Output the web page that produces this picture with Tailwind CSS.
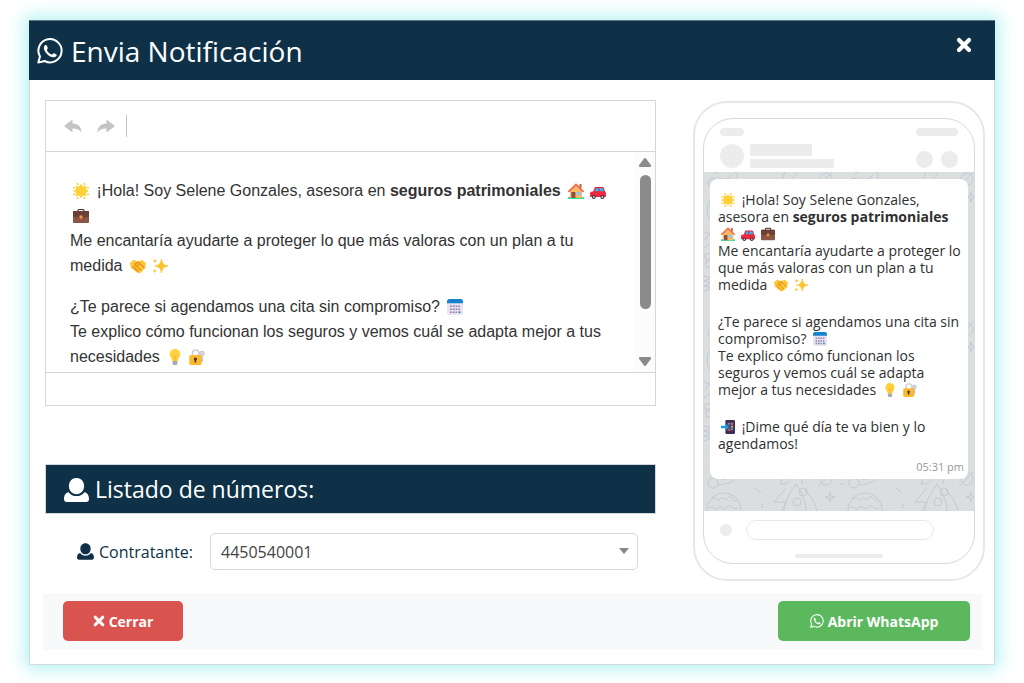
<!DOCTYPE html>
<html lang="es">
    <head>
        <meta charset="UTF-8" />
        <meta name="viewport" content="width=device-width, initial-scale=1.0" />
        <script src="https://cdn.jsdelivr.net/npm/@tailwindcss/browser@4"></script>
        <title>Envia Notificación</title>
    </head>
    <body class="min-h-screen bg-white px-[29px] py-5 font-['Open_Sans','Noto_Sans',sans-serif] text-[#212529]">
        <!-- Icon and emoji definitions -->
        <svg class="hidden" aria-hidden="true">
            <symbol id="whatsapp" viewBox="0 0 26 26">
                <path d="M1.3 24.6 3 18.6A11.6 11.6 0 1 1 7.6 23Z" fill="none" stroke="currentColor" stroke-width="2" stroke-linejoin="round" />
                <path d="M8.600 7c.700-.200 1.100.200 1.400.900l.700 1.800c.2.600-.1 1-.5 1.500-.4.500-.4.900 0 1.500 1 1.700 2.400 2.900 4.200 3.700.5.200.9.100 1.300-.4.700-.800 1-.900 1.700-.6l1.700.9c.6.300.7.700.5 1.300-.5 1.300-2 1.900-3.600 1.600-4.100-.8-8-4.300-9-8.300-.4-1.700.2-3.500 1.600-3.900Z" fill="currentColor" />
            </symbol>
            <symbol id="user" viewBox="0 0 25 24">
                <path d="M12.500 0c4.400 0 7.600 3.300 7.600 8s-3.200 8.200-7.600 8.200S4.900 12.700 4.900 8 8.100 0 12.500 0Z" />
                <path d="M4.600 14.200c2 2.500 4.800 3.900 7.900 3.900s5.900-1.400 7.900-3.900c3.100.4 4.600 3.300 4.600 6.800 0 1.900-1 3-2.800 3H2.800C1 24 0 22.900 0 21c0-3.500 1.500-6.400 4.600-6.800Z" />
            </symbol>
            <symbol id="times" viewBox="0 0 16 16">
                <path d="m3 3 10 10M13 3 3 13" stroke="currentColor" stroke-width="4.200" stroke-linecap="round" />
            </symbol>
            <symbol id="reply" viewBox="0 0 18 14">
                <path d="M0 7 8.500.500v4C14 4.600 17.500 8 17.500 13.500 15.500 10.500 13 9.400 8.500 9.500v4Z" />
            </symbol>
            <symbol id="sun" viewBox="0 0 16 16">
                <path d="m8 .8 2 2.800 3.300-.9-.3 3.400L15.600 8 13 9.900l.3 3.400-3.300-.9L8 15.200l-2-2.800-3.300.9.300-3.400L.4 8 3 6.100l-.3-3.400 3.300.9Z" fill="#fdd13a" />
                <g fill="#fcc21b">
                    <circle cx="4.600" cy="1" r=".9" /><circle cx="11.400" cy="1" r=".9" />
                    <circle cx="1" cy="4.600" r=".9" /><circle cx="15" cy="4.600" r=".9" />
                    <circle cx="1" cy="11.400" r=".9" /><circle cx="15" cy="11.400" r=".9" />
                    <circle cx="4.600" cy="15" r=".9" /><circle cx="11.400" cy="15" r=".9" />
                </g>
            </symbol>
            <symbol id="house" viewBox="0 0 16 16">
                <path d="M0 14h16v2H0z" fill="#2fe09b" />
                <path d="M11.500 1h2v4h-2z" fill="#c75b45" />
                <path d="M2 7.500 8 2l6 5.500V15H2z" fill="#fbb867" />
                <path d="M.9 8.300 8 1.400l7.100 6.900" fill="none" stroke="#ed6a4c" stroke-width="1.800" stroke-linecap="round" />
                <path d="M3.400 9h4v6h-4z" fill="#8a5142" />
                <path d="M9 9h3.600v3H9z" fill="#7ecbff" />
            </symbol>
            <symbol id="car" viewBox="0 0 16 16">
                <path d="M5.500 4h6.500c1 0 1.600.400 2 1.200L15.200 9H3l1.500-3.800C4.700 4.400 4.900 4 5.500 4Z" fill="#e8213f" />
                <path d="M6 5h2.500v3.500H4.600zM9.500 5H12c.6 0 .8.200 1 .600l1 2.900H9.500z" fill="#37b5e8" />
                <path d="M2 8.500h12.200c1.100 0 1.800.800 1.800 1.700V13c0 .700-.3 1-1 1H1c-.7 0-1-.400-1-1v-1.800C0 9.500.7 8.500 2 8.500Z" fill="#f3273e" />
                <circle cx="3.800" cy="14" r="2" fill="#35303e" /><circle cx="12.300" cy="14" r="2" fill="#35303e" />
                <circle cx="3.800" cy="14" r=".9" fill="#ddd" /><circle cx="12.300" cy="14" r=".9" fill="#ddd" />
            </symbol>
            <symbol id="briefcase" viewBox="0 0 16 16">
                <path d="M5 4V2.500C5 2 5.400 1.500 6 1.500h4c.600 0 1 .500 1 1V4" fill="none" stroke="#4b2b27" stroke-width="1.200" />
                <rect y="3" width="16" height="12" rx="1" fill="#8c5543" />
                <path d="M0 4c0-.600.400-1 1-1h14c.600 0 1 .400 1 1v4.500l-6 1.200H6L0 8.500Z" fill="#6a4037" />
                <circle cx="8" cy="9" r="1.700" fill="#f19a3b" />
            </symbol>
            <symbol id="handshake" viewBox="0 0 16 16">
                <path d="m0 5 3.500-3L8 3.500 12.500 2 16 5.500l-1 5-4.500 4.200c-1 .700-2 .600-3 .100L1 10Z" fill="#ffc636" />
                <path d="m5 6 3-2 6 5.500M3 8.500l5 5M5 7.200l6 5M5 6c.6 2.500 2.200 2 3.800.500" fill="none" stroke="#e58a1c" stroke-width="1.100" stroke-linecap="round" />
            </symbol>
            <symbol id="sparkles" viewBox="0 0 16 16">
                <path d="M9.500 1c.9 4.700 2 6 6.500 7-4.500 1-5.600 2.300-6.500 7C8.600 10.300 7.500 9 3 8c4.500-1 5.600-2.300 6.500-7Z" fill="#fdc22f" stroke="#fdc22f" stroke-width=".8" stroke-linejoin="round" />
                <path d="M3 .500c.3 1.700.8 2.200 2.500 2.500C3.800 3.300 3.300 3.800 3 5.500 2.700 3.800 2.200 3.300.5 3 2.200 2.700 2.700 2.200 3 .500ZM2.600 10.500c.3 1.700.8 2.200 2.500 2.500-1.700.300-2.200.800-2.500 2.500-.3-1.700-.8-2.200-2.500-2.500 1.700-.300 2.200-.800 2.500-2.500Z" fill="#fdc22f" />
            </symbol>
            <symbol id="calendar" viewBox="0 0 16 16">
                <rect width="16" height="16" rx="2.500" fill="#e9e3f0" />
                <path d="M0 4.200V2.500C0 1 1 0 2.500 0h11C15 0 16 1 16 2.500v1.700Z" fill="#1683cf" />
                <path d="M3 7.200h10M3 10.200h10M3 13.200h7" stroke="#8a83ad" stroke-width="1.600" stroke-dasharray="1.800 1" />
                <path d="M11.500 12.400h2v1.600h-2z" fill="#1683cf" />
            </symbol>
            <symbol id="bulb" viewBox="0 0 16 16">
                <path d="M8 0c3.300 0 5.200 2.300 5.200 5.200 0 2.800-2.100 4-2.500 6.800H5.300C4.900 9.200 2.800 8 2.800 5.200 2.800 2.300 4.700 0 8 0Z" fill="#ffd23c" />
                <path d="M6.500 6.500 8 8l1.500-1.500M8 8v4" fill="none" stroke="#f6a22a" stroke-width=".8" />
                <path d="M5.600 12h4.800v2.500c0 1-.8 1.500-2.400 1.500s-2.400-.500-2.400-1.500Z" fill="#a9a6b3" />
            </symbol>
            <symbol id="lock" viewBox="0 0 16 16">
                <path d="M3.500 7V4.500C3.500 2.300 4.800 1 6.800 1S10 2.300 10 4.500V7" fill="none" stroke="#d0ccd8" stroke-width="1.600" />
                <path d="M13 6.500V13" stroke="#bcb8c4" stroke-width="1.600" />
                <circle cx="13" cy="4.500" r="2" fill="#dedbe3" stroke="#c9c6d0" stroke-width="1.400" />
                <rect x=".3" y="6" width="12.200" height="10" rx="1.500" fill="#fcb92c" />
                <path d="M6.400 8.600a1.500 1.500 0 0 1 .8 2.800v2H5.600v-2a1.500 1.500 0 0 1 .8-2.800Z" fill="#4b3440" />
            </symbol>
            <symbol id="phone-arrow" viewBox="0 0 16 16">
                <rect x="5" width="11" height="16" rx="1.500" fill="#3f2d57" />
                <path d="M6.500 2h8v11h-8z" fill="#563a60" />
                <path d="M8 3.500h2v2H8zM11.500 9.500h2v2h-2z" fill="#31b3e8" />
                <path d="M11.500 3.500h2v2h-2zM8.500 10h2v2h-2z" fill="#f5713f" />
                <path d="M11.500 6.500h2v2h-2z" fill="#f9c23c" />
                <path d="M0 6.500h5V4l4.500 4L5 12V9.500H0Z" fill="#1d9ce5" />
            </symbol>
        </svg>

        <div class="border border-[#d5dcde] bg-white shadow-[0_0_17px_4px_#b2f2f2]">
            <!-- Header -->
            <header class="-mx-px -mt-px flex h-[60px] items-center justify-between border-t border-[#5c7580] bg-[#0e3147] pr-[23px] pl-2 text-white">
                <h1 class="flex items-center gap-2 text-[28px]">
                    <svg class="size-[26px]"><use href="#whatsapp" /></svg>
                    Envia Notificación
                </h1>
                <button type="button" aria-label="Cerrar ventana" class="mb-3">
                    <svg class="size-4"><use href="#times" /></svg>
                </button>
            </header>

            <main class="flex justify-between pt-5 pr-[9px] pl-[15px]">
                <div class="w-[611px]">
                    <!-- Editor -->
                    <section class="border border-[#d3d7db]">
                        <div class="flex h-[50px] items-center gap-[15px] pl-[18px] text-[#c4c4c4]">
                            <button type="button" aria-label="Deshacer">
                                <svg class="h-[14px] w-[18px] fill-current"><use href="#reply" /></svg>
                            </button>
                            <button type="button" aria-label="Rehacer">
                                <svg class="h-[14px] w-[18px] -scale-x-100 fill-current"><use href="#reply" /></svg>
                            </button>
                            <span class="-ml-1 h-[22px] w-px bg-[#c4c4c4]"></span>
                        </div>
                        <div class="flex h-[222px] justify-between border-y border-[#d3d7db]">
                            <div
                                contenteditable="true"
                                role="textbox"
                                aria-label="Mensaje"
                                class="w-[568px] space-y-4 pt-[26px] pl-6 font-['Liberation_Sans',Arial,sans-serif] text-base leading-[25px] text-[#333]"
                            >
                                <p>
                                    <svg class="mx-[3px] inline size-4 align-[-3px]"><use href="#sun" /></svg> ¡Hola! Soy Selene Gonzales, asesora en <b>seguros patrimoniales</b>
                                    <svg class="mx-[3px] inline size-4 align-[-3px]"><use href="#house" /></svg><svg class="mx-[3px] inline size-4 align-[-3px]"><use href="#car" /></svg><svg class="mx-[3px] inline size-4 align-[-3px]"><use href="#briefcase" /></svg><br />
                                    Me encantaría ayudarte a proteger lo que más valoras con un plan a tu medida
                                    <svg class="mx-[3px] inline size-4 align-[-3px]"><use href="#handshake" /></svg><svg class="mx-[3px] inline size-4 align-[-3px]"><use href="#sparkles" /></svg>
                                </p>
                                <p>
                                    ¿Te parece si agendamos una cita sin compromiso?
                                    <svg class="mx-[3px] inline size-4 align-[-3px]"><use href="#calendar" /></svg><br />
                                    Te explico cómo funcionan los seguros y vemos cuál se adapta mejor a tus necesidades
                                    <svg class="mx-[3px] inline size-4 align-[-3px]"><use href="#bulb" /></svg><svg class="mx-[3px] inline size-4 align-[-3px]"><use href="#lock" /></svg>
                                </p>
                            </div>
                            <!-- Scrollbar -->
                            <div class="flex w-5 flex-col items-center bg-[#fcfcfc] py-[6px]">
                                <svg class="h-[9px] w-3 fill-[#8b8b8b]" viewBox="0 0 12 9"><path d="M6 0c.5 0 .8.300 1 .600L11.800 7c.5.900.1 2-1 2H1.200c-1.100 0-1.500-1.100-1-2L5 .600C5.200.300 5.500 0 6 0Z" /></svg>
                                <div class="mt-2 h-[134px] w-[11px] rounded-full bg-[#8b8b8b]"></div>
                                <svg class="mt-auto h-[9px] w-3 rotate-180 fill-[#8b8b8b]" viewBox="0 0 12 9"><path d="M6 0c.5 0 .8.300 1 .600L11.800 7c.5.900.1 2-1 2H1.200c-1.100 0-1.500-1.100-1-2L5 .600C5.200.300 5.500 0 6 0Z" /></svg>
                            </div>
                        </div>
                        <div class="h-8"></div>
                    </section>

                    <!-- Numbers -->
                    <h2 class="mt-[58px] flex h-[50px] items-center gap-[6px] border border-[#d3d7db] bg-[#0e3147] pt-px pl-[18px] text-[23px] text-white">
                        <svg class="h-6 w-[25px] fill-current"><use href="#user" /></svg>
                        Listado de números:
                    </h2>
                    <div class="mt-[19px] flex items-center justify-between pr-[18px] pl-8">
                        <label for="contratante" class="flex items-center gap-[5px] text-base text-[#0e3147]">
                            <svg class="h-[17px] w-[17px] fill-current"><use href="#user" /></svg>
                            Contratante:
                        </label>
                        <div class="relative w-[428px]">
                            <select id="contratante" class="h-[37px] w-full appearance-none rounded-[5px] border border-[#d3d9de] bg-white pl-[10px] text-base text-[#444]">
                                <option>4450540001</option>
                            </select>
                            <svg class="pointer-events-none absolute top-[15px] right-[9px] h-[6px] w-[10px] fill-[#888]" viewBox="0 0 10 6"><path d="M0 0h10L5 6z" /></svg>
                        </div>
                    </div>
                </div>

                <!-- Phone preview -->
                <aside class="mt-px w-[292px] rounded-[34px] border-2 border-[#e6e8e8] px-2 pt-[15px] pb-[15px]">
                    <div class="overflow-hidden rounded-[30px] border border-[#d5dadb]">
                        <div class="h-[53px] px-4 pt-[9px]">
                            <div class="flex justify-between">
                                <span class="h-2 w-6 rounded-full bg-[#ececec]"></span>
                                <span class="h-2 w-[42px] rounded-full bg-[#ececec]"></span>
                            </div>
                            <div class="mt-2 flex items-center">
                                <span class="size-6 rounded-full bg-[#ececec]"></span>
                                <div class="ml-[6px] space-y-[3px]">
                                    <div class="h-3 w-[62px] bg-[#ececec]"></div>
                                    <div class="h-[9px] w-[84px] bg-[#ececec]"></div>
                                </div>
                                <span class="mt-[7px] ml-auto size-[17px] rounded-full bg-[#ececec]"></span>
                                <span class="mt-[7px] ml-2 size-[17px] rounded-full bg-[#ececec]"></span>
                            </div>
                        </div>
                        <div class="relative bg-[#dadedf] px-[6px] pt-[7px] pb-8">
                            <svg class="absolute inset-0 size-full" fill="none" stroke="#c3c8d2">
                                <pattern id="doodles" width="141" height="150" patternUnits="userSpaceOnUse">
                                    <!-- planet -->
                                    <circle cx="20" cy="38" r="17" />
                                    <path d="M8 27c4-4 5 4 8 0s5 4 8-1 4 4 9 3M5 36c5-4 5 4 9 0s5 4 9-1 5 4 11 1" />
                                    <!-- saucer -->
                                    <path d="M10 2c8-6 20-6 23 0 2 6-8 10-19 11M14 5c4 4 12 2 14-2" />
                                    <circle cx="9" cy="11" r="5" />
                                    <!-- rocket -->
                                    <path d="M80 46c-1-12 2-20 12-34 8 12 12 22 9 36M82 30l-8 16M82 16 70 30h11M101 18c8 8 13 18 12 28l-10-4" />
                                    <circle cx="93" cy="30" r="4" /><circle cx="99" cy="20" r="4" />
                                    <path d="M76 12 81 0M81 12c5-2 9-7 12-12M76 12h5M98 12V7" />
                                    <circle cx="122" cy="7" r="6" /><path d="m114 15 16-17" />
                                    <path d="m126 20 1 4 4 1-4 1-1 4-1-4-4-1 4-1ZM51 16l6 5M58 32v4M58 42v4M110 40h3M136 12h4" />
                                    <!-- stacks and marks -->
                                    <path d="M0 60c8 2 12 8 0 16M8 58 1 68M1 82h8v5H1zM2 89h8v6H2zM0 104l8 2-8 3 8 2-8 3 8 2-8 3" />
                                    <path d="M136 60c4 4 3 8-1 12M133 84l5 16M135 104l4 14M134 130h5" />
                                </pattern>
                                <rect width="100%" height="100%" stroke="none" fill="url(#doodles)" />
                            </svg>
                            <div class="relative rounded-lg bg-white pt-3 pr-1 pb-1 pl-2 text-[14px] leading-[17px] text-[#303030]">
                                <p>
                                    <svg class="mx-[3px] inline size-[14px] align-[-2px]"><use href="#sun" /></svg> ¡Hola! Soy Selene Gonzales,<br />
                                    asesora en <b>seguros patrimoniales</b><br />
                                    <svg class="mx-[3px] inline size-[14px] align-[-2px]"><use href="#house" /></svg><svg class="mx-[3px] inline size-[14px] align-[-2px]"><use href="#car" /></svg><svg class="mx-[3px] inline size-[14px] align-[-2px]"><use href="#briefcase" /></svg><br />
                                    Me encantaría ayudarte a proteger lo que más valoras con un plan a tu medida
                                    <svg class="mx-[3px] inline size-[14px] align-[-2px]"><use href="#handshake" /></svg><svg class="mx-[3px] inline size-[14px] align-[-2px]"><use href="#sparkles" /></svg>
                                </p>
                                <p class="mt-5">
                                    ¿Te parece si agendamos una cita sin compromiso?
                                    <svg class="mx-[3px] inline size-[14px] align-[-2px]"><use href="#calendar" /></svg><br />
                                    Te explico cómo funcionan los seguros y vemos cuál se adapta mejor a tus necesidades
                                    <svg class="mx-[3px] inline size-[14px] align-[-2px]"><use href="#bulb" /></svg><svg class="mx-[3px] inline size-[14px] align-[-2px]"><use href="#lock" /></svg>
                                </p>
                                <p class="mt-5">
                                    <svg class="mx-[3px] inline size-[14px] align-[-2px]"><use href="#phone-arrow" /></svg> ¡Dime qué día te va bien y lo agendamos!
                                </p>
                                <p class="mt-[6px] text-right text-[11px] text-[#999]">05:31 pm</p>
                            </div>
                        </div>
                        <div class="h-[52px] px-4 pt-[9px]">
                            <div class="flex items-center gap-[14px]">
                                <span class="size-3 rounded-full bg-[#ececec]"></span>
                                <span class="h-5 w-[188px] rounded-full border border-[#e8e8e8]"></span>
                            </div>
                            <div class="mx-auto mt-[14px] h-1 w-[88px] rounded-full bg-[#ececec]"></div>
                        </div>
                    </div>
                </aside>
            </main>

            <!-- Footer -->
            <footer class="mt-[13px] mr-3 mb-[14px] ml-[13px] flex h-14 items-start justify-between bg-[#f7f9fb] pt-[7px] pr-3 pl-5 text-[14px] font-bold text-white">
                <button type="button" class="flex h-10 w-[120px] items-center justify-center gap-1 rounded-[5px] bg-[#d9534f]">
                    <svg class="size-3"><use href="#times" /></svg>
                    Cerrar
                </button>
                <button type="button" class="flex h-10 w-48 items-center justify-center gap-1 rounded-[5px] bg-[#5cb85c]">
                    <svg class="size-[14px]"><use href="#whatsapp" /></svg>
                    Abrir WhatsApp
                </button>
            </footer>
        </div>
    </body>
</html>
